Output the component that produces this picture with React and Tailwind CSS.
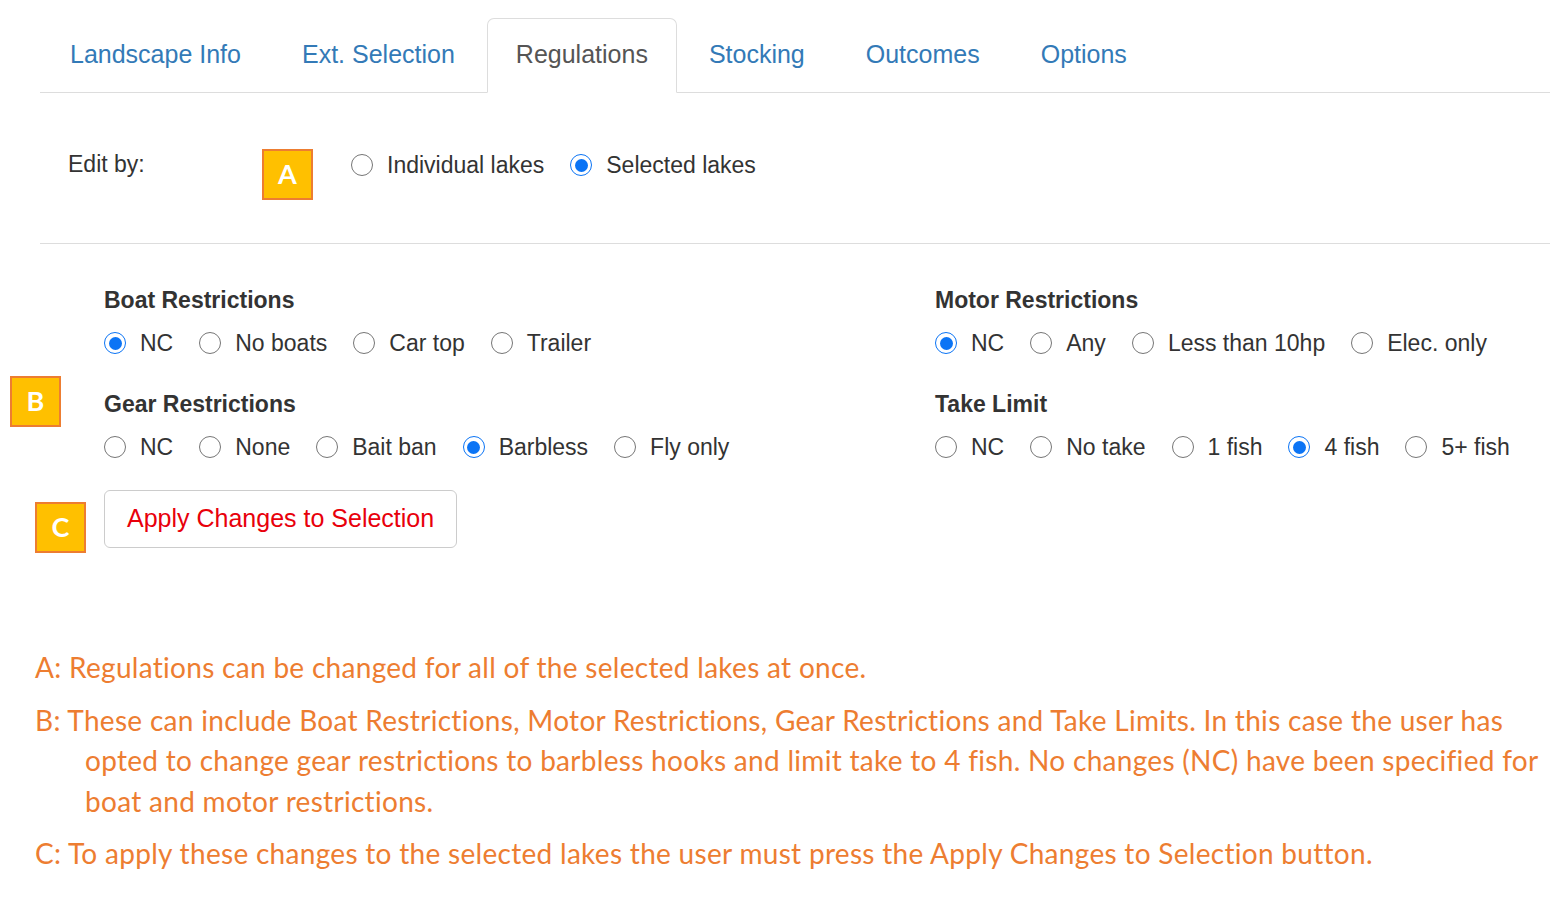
import React from 'react';

const ui = { fontFamily: '"Liberation Sans", Arial, sans-serif' };
const note = { fontFamily: 'Lato, "Open Sans", sans-serif' };

const tabs = ['Landscape Info', 'Ext. Selection', 'Regulations', 'Stocking', 'Outcomes', 'Options'];

function Badge({ letter }) {
  return (
    <div
      className="w-[51px] h-[51px] bg-[#ffc000] border-2 border-[#ed7d31] flex items-center justify-center text-white text-[27px] font-bold shrink-0"
      style={note}
    >
      {letter}
    </div>
  );
}

function Radio({ label, checked }) {
  return (
    <label className="flex items-center gap-[14px] h-[28px]">
      {checked ? (
        <span className="w-[22px] h-[22px] rounded-full border-[1.5px] border-[#0b74f5] flex items-center justify-center shrink-0">
          <span className="w-[13px] h-[13px] rounded-full bg-[#0b74f5]" />
        </span>
      ) : (
        <span className="w-[22px] h-[22px] rounded-full border border-[#767676] bg-white shrink-0" />
      )}
      <span className="text-[23px] text-[#333] leading-[28px]">{label}</span>
    </label>
  );
}

function Group({ title, options, value }) {
  return (
    <div>
      <div className="text-[23px] font-bold text-[#333] leading-[24px]">{title}</div>
      <div className="flex items-center gap-[26px] mt-[17px]">
        {options.map((o) => (
          <Radio key={o} label={o} checked={o === value} />
        ))}
      </div>
    </div>
  );
}

export default function App() {
  return (
    <div className="w-[1561px] h-[898px] bg-white overflow-hidden" style={ui}>
      {/* tabs */}
      <div className="pl-[40px] pr-[11px] pt-[18px]">
        <div className="flex border-b border-[#ddd] pl-px">
          {tabs.map((t) => {
            const active = t === 'Regulations';
            return (
              <div
                key={t}
                className={
                  active
                    ? 'px-[28px] pt-[21px] pb-[23px] mr-[3px] -mb-px border border-[#ddd] border-b-white bg-white rounded-t-[7px] text-[25px] leading-[28px] text-[#555]'
                    : 'px-[28px] pt-[21px] pb-[23px] mr-[3px] border border-transparent text-[25px] leading-[28px] text-[#337ab7]'
                }
              >
                {t}
              </div>
            );
          })}
        </div>

        {/* edit by */}
        <div className="flex items-start mt-[56px]">
          <div className="w-[222px] pl-[28px] text-[23px] leading-[28px] text-[#333] mt-px">Edit by:</div>
          <Badge letter="A" />
          <div className="flex items-center gap-[26px] ml-[38px] mt-[2px]">
            <Radio label="Individual lakes" />
            <Radio label="Selected lakes" checked />
          </div>
        </div>

        <div className="h-px bg-[#ddd] mt-[43px]" />
      </div>

      {/* regulations */}
      <div className="flex pt-[44px]">
        <div className="w-[104px] shrink-0" />
        <div className="w-[831px] shrink-0">
          <Group title="Boat Restrictions" options={['NC', 'No boats', 'Car top', 'Trailer']} value="NC" />
        </div>
        <Group title="Motor Restrictions" options={['NC', 'Any', 'Less than 10hp', 'Elec. only']} value="NC" />
      </div>

      <div className="flex mt-[19px]">
        <div className="w-[104px] shrink-0 pl-[10px]">
          <Badge letter="B" />
        </div>
        <div className="w-[831px] shrink-0 pt-[16px]">
          <Group title="Gear Restrictions" options={['NC', 'None', 'Bait ban', 'Barbless', 'Fly only']} value="Barbless" />
        </div>
        <div className="pt-[16px]">
          <Group title="Take Limit" options={['NC', 'No take', '1 fish', '4 fish', '5+ fish']} value="4 fish" />
        </div>
      </div>

      <div className="flex items-start mt-[29px]">
        <div className="w-[104px] shrink-0 pl-[35px] pt-[12px]">
          <Badge letter="C" />
        </div>
        <button className="h-[58px] px-[22px] border border-[#ccc] rounded-[6px] bg-white text-[25px] text-[#e8000b]">
          Apply Changes to Selection
        </button>
      </div>

      {/* notes */}
      <div className="pl-[35px] mt-[94px] text-[28px] leading-[40.5px] text-[#ed7d31] tracking-[0.3px]" style={note}>
        <div>A: Regulations can be changed for all of the selected lakes at once.</div>
        <div className="mt-[12px] whitespace-nowrap">
          B: These can include Boat Restrictions, Motor Restrictions, Gear Restrictions and Take Limits. In this case the user has
        </div>
        <div className="pl-[50px] whitespace-nowrap">
          opted to change gear restrictions to barbless hooks and limit take to 4 fish. No changes (NC) have been specified for
        </div>
        <div className="pl-[50px]">boat and motor restrictions.</div>
        <div className="mt-[12px] whitespace-nowrap">
          C: To apply these changes to the selected lakes the user must press the Apply Changes to Selection button.
        </div>
      </div>
    </div>
  );
}
